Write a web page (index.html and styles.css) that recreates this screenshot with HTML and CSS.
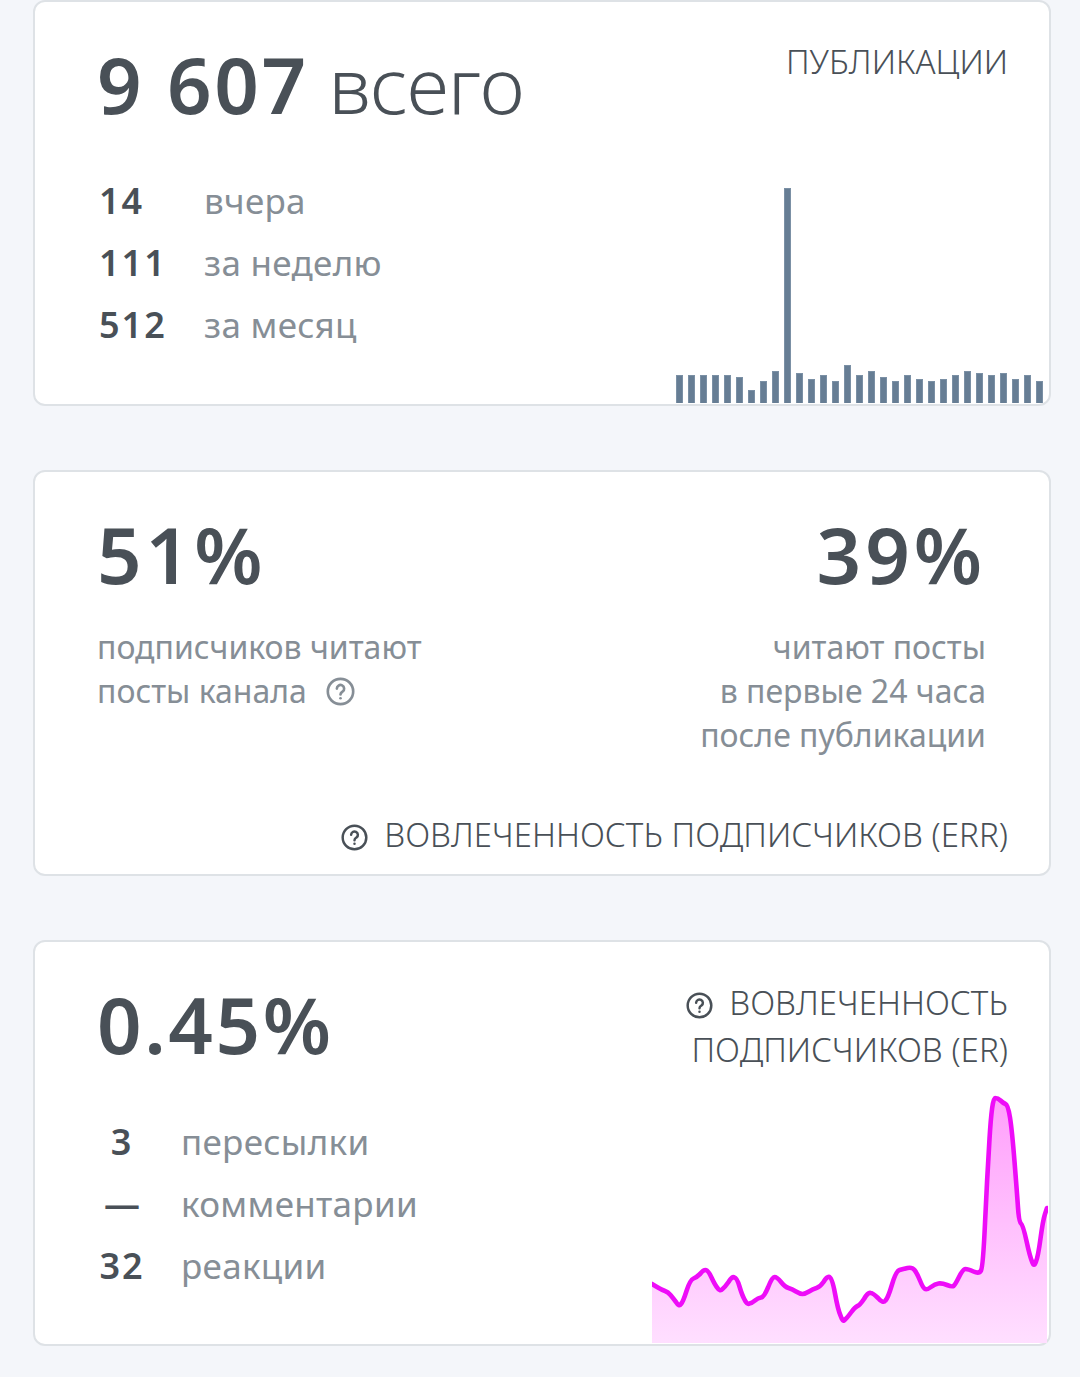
FILE: index.html
```html
<!DOCTYPE html>
<html lang="en">
<head>
    <meta charset="UTF-8">
    <meta name="viewport" content="width=device-width, initial-scale=1.0">
    <title>Статистика канала</title>
    <link rel="stylesheet" href="styles.css">
</head>
<body>
    <div class="container">
        <section class="card">
            <div class="card-head">
                <div class="big"><b>9 607</b> всего</div>
                <div class="caption caption-posts">ПУБЛИКАЦИИ</div>
            </div>
            <div class="card-body">
                <div class="stats stats-posts">
                    <div class="stat"><b>14</b><span>вчера</span></div>
                    <div class="stat"><b>111</b><span>за неделю</span></div>
                    <div class="stat"><b>512</b><span>за месяц</span></div>
                </div>
                <div class="bars">
                    <i style="height:28px"></i><i style="height:28px"></i><i style="height:28px"></i><i style="height:28px"></i>
                    <i style="height:28px"></i><i style="height:26px"></i><i style="height:13px"></i><i style="height:22px"></i>
                    <i style="height:32px"></i><i style="height:215px"></i><i style="height:30px"></i><i style="height:24px"></i>
                    <i style="height:28px"></i><i style="height:22px"></i><i style="height:38px"></i><i style="height:28px"></i>
                    <i style="height:32px"></i><i style="height:26px"></i><i style="height:22px"></i><i style="height:28px"></i>
                    <i style="height:24px"></i><i style="height:22px"></i><i style="height:24px"></i><i style="height:28px"></i>
                    <i style="height:32px"></i><i style="height:30px"></i><i style="height:28px"></i><i style="height:30px"></i>
                    <i style="height:24px"></i><i style="height:28px"></i><i style="height:22px"></i>
                </div>
            </div>
        </section>

        <section class="card card-err">
            <div class="err-row">
                <div class="err-col">
                    <div class="big"><b>51%</b></div>
                    <p class="note">подписчиков читают<br>посты канала
                        <svg class="help help-note" viewBox="0 0 24 24"><circle cx="12" cy="12" r="10.5"/><path d="M9 9.6a3 3 0 1 1 4.8 2.4c-1 .7-1.8 1.2-1.8 2.4"/><circle class="dot" cx="12" cy="17.6" r="1.1"/></svg>
                    </p>
                </div>
                <div class="err-col err-right">
                    <div class="big"><b>39%</b></div>
                    <p class="note">читают посты<br>в первые 24 часа<br>после публикации</p>
                </div>
            </div>
            <div class="caption caption-err">
                <svg class="help" viewBox="0 0 24 24"><circle cx="12" cy="12" r="10.5"/><path d="M9 9.6a3 3 0 1 1 4.8 2.4c-1 .7-1.8 1.2-1.8 2.4"/><circle class="dot" cx="12" cy="17.6" r="1.1"/></svg>
                ВОВЛЕЧЕННОСТЬ ПОДПИСЧИКОВ (ERR)
            </div>
        </section>

        <section class="card">
            <div class="card-head">
                <div class="big big-er"><b>0.45%</b></div>
                <div class="caption caption-er">
                    <svg class="help" viewBox="0 0 24 24"><circle cx="12" cy="12" r="10.5"/><path d="M9 9.6a3 3 0 1 1 4.8 2.4c-1 .7-1.8 1.2-1.8 2.4"/><circle class="dot" cx="12" cy="17.6" r="1.1"/></svg>
                    ВОВЛЕЧЕННОСТЬ<br>ПОДПИСЧИКОВ (ER)
                </div>
            </div>
            <div class="card-body">
                <div class="stats stats-er">
                    <div class="stat"><b>3</b><span>пересылки</span></div>
                    <div class="stat"><b class="dash">—</b><span>комментарии</span></div>
                    <div class="stat"><b>32</b><span>реакции</span></div>
                </div>
                <svg class="spark" viewBox="0 0 396 250">
                    <defs>
                        <linearGradient id="sparkFill" x1="0" y1="0" x2="0" y2="1">
                            <stop offset="0" stop-color="#ff9ffb"/>
                            <stop offset="1" stop-color="#ffdfff"/>
                        </linearGradient>
                    </defs>
                    <path class="spark-area" d="M0 191L5 194Q10 197 13 198Q16 199 18.5 202Q21 205 24 209Q27 214 29 211Q31 209 34.5 198Q38 187 41.5 185.5Q45 184 48 181Q51 177 53.5 177Q56 177 59.5 184.5Q63 192 65.5 195Q68 199 70.5 196Q73 194 76.5 189Q80 183 82.5 184.5Q85 185 87.5 193.5Q90 202 92.5 206.5Q95 212 97.5 210.5Q100 210 103 207.5Q106 205 109 204.5Q112 204 116 194.5Q120 184 122.5 184Q125 184 129 189Q133 194 136.5 195Q140 196 144 198.5Q148 201 150.5 201Q153 201 157 198.5Q161 196 164.5 195Q168 194 171.5 189Q175 183 177.5 184Q180 184 183 200.5Q186 217 188.5 222.5Q191 230 193 226.5Q195 225 199 219.5Q203 214 205.5 213Q208 212 212 206Q216 199 218.5 200Q221 200 226 205Q231 211 233.5 207.5Q236 205 240 191.5Q244 178 247.5 177Q251 176 255.5 175Q260 174 262.5 177Q265 180 268 187.5Q271 195 273 196Q275 197 279 194Q283 191 286.5 190.5Q290 190 295 192Q300 194 301.5 193Q303 192 307 184Q311 176 313.5 176Q316 176 321.5 178.5Q327 181 329 177.5Q331 174 333 130.5Q335 87 337.5 46Q340 5 343 5Q346 5 348.5 7.5Q351 10 353.5 11Q356 12 358 24.5Q360 37 362.5 68.5Q365 100 366 114.5Q367 129 369 130.5Q371 132 374.5 148Q378 164 380 168.5Q382 175 384 168.5Q386 164 388.5 145.5Q391 127 393 121L395 115V250H0Z"/>
                    <path class="spark-line" d="M0 191L5 194Q10 197 13 198Q16 199 18.5 202Q21 205 24 209Q27 214 29 211Q31 209 34.5 198Q38 187 41.5 185.5Q45 184 48 181Q51 177 53.5 177Q56 177 59.5 184.5Q63 192 65.5 195Q68 199 70.5 196Q73 194 76.5 189Q80 183 82.5 184.5Q85 185 87.5 193.5Q90 202 92.5 206.5Q95 212 97.5 210.5Q100 210 103 207.5Q106 205 109 204.5Q112 204 116 194.5Q120 184 122.5 184Q125 184 129 189Q133 194 136.5 195Q140 196 144 198.5Q148 201 150.5 201Q153 201 157 198.5Q161 196 164.5 195Q168 194 171.5 189Q175 183 177.5 184Q180 184 183 200.5Q186 217 188.5 222.5Q191 230 193 226.5Q195 225 199 219.5Q203 214 205.5 213Q208 212 212 206Q216 199 218.5 200Q221 200 226 205Q231 211 233.5 207.5Q236 205 240 191.5Q244 178 247.5 177Q251 176 255.5 175Q260 174 262.5 177Q265 180 268 187.5Q271 195 273 196Q275 197 279 194Q283 191 286.5 190.5Q290 190 295 192Q300 194 301.5 193Q303 192 307 184Q311 176 313.5 176Q316 176 321.5 178.5Q327 181 329 177.5Q331 174 333 130.5Q335 87 337.5 46Q340 5 343 5Q346 5 348.5 7.5Q351 10 353.5 11Q356 12 358 24.5Q360 37 362.5 68.5Q365 100 366 114.5Q367 129 369 130.5Q371 132 374.5 148Q378 164 380 168.5Q382 175 384 168.5Q386 164 388.5 145.5Q391 127 393 121L395 115"/>
                </svg>
            </div>
        </section>
    </div>
</body>
</html>
```

FILE: styles.css
```css
* {
    box-sizing: border-box;
}
body {
    font-family: 'Noto Sans', 'Open Sans', sans-serif;
    background: #f4f6fa;
    color: #495057;
    margin: 0;
    overflow: hidden;
}
.container {
    display: flex;
    flex-direction: column;
    gap: 64px;
    padding: 0 29px 0 33px;
}
.card {
    height: 406px;
    background: #fff;
    border: 2px solid #dee2e6;
    border-radius: 12px;
    display: flex;
    flex-direction: column;
}
.card-head {
    display: flex;
    justify-content: space-between;
    align-items: flex-start;
    padding: 34px 41px 0 62px;
}
.card-body {
    flex: 1;
    display: flex;
    justify-content: space-between;
    align-items: flex-end;
}
.big {
    font-size: 78px;
    line-height: 96px;
    font-weight: 300;
    letter-spacing: -0.8px;
    white-space: nowrap;
}
.big b {
    font-weight: 600;
    letter-spacing: 2.6px;
}
.err-col .big b {
    letter-spacing: 4px;
}
.caption {
    font-size: 33px;
    font-weight: 300;
    letter-spacing: 0.05px;
    white-space: nowrap;
    text-align: right;
}
.caption-posts {
    line-height: 50px;
    margin-top: 1px;
}
.caption-er {
    line-height: 47px;
    margin-top: 3px;
}
.help {
    width: 27px;
    height: 27px;
    margin-right: 8px;
    vertical-align: -4px;
    fill: none;
    stroke: currentColor;
    stroke-width: 2.2;
    stroke-linecap: round;
}
.help .dot {
    fill: currentColor;
    stroke: none;
}
.help-note {
    width: 29px;
    height: 29px;
    margin: 0 0 0 11px;
    vertical-align: -3px;
}
.stats {
    align-self: flex-start;
    display: flex;
    flex-direction: column;
    font-size: 35px;
}
.stats-posts {
    padding: 37px 0 0 64px;
}
.stats-er {
    padding: 37px 0 0 64px;
}
.stat {
    display: flex;
    align-items: center;
    height: 62px;
}
.stat b {
    font-weight: 600;
    font-size: 36px;
    letter-spacing: 2px;
}
.stat span {
    color: #868e96;
    font-weight: 400;
    letter-spacing: 0.3px;
}
.stats-posts .stat b {
    width: 105px;
}
.stats-er .stat b {
    width: 82px;
    padding-right: 36px;
    text-align: center;
}
.stats-er .dash {
    letter-spacing: 0;
}
.bars {
    display: flex;
    align-items: flex-end;
    gap: 4.8px;
    margin: 0 6px 1px 0;
}
.bars i {
    display: block;
    width: 7.2px;
    background: #667d94;
    border: 1px solid #7b90a5;
    border-bottom: 0;
}
.spark {
    width: 396px;
    height: 250px;
    margin: 0 1px 1px 0;
    display: block;
    overflow: hidden;
}
.spark-area {
    fill: url(#sparkFill);
}
.spark-line {
    fill: none;
    stroke: #ee0cf8;
    stroke-width: 4.6;
    stroke-linejoin: round;
    stroke-linecap: round;
}
.card-err {
    justify-content: space-between;
}
.err-row {
    display: flex;
    justify-content: space-between;
    padding: 34px 63px 0 62px;
}
.err-right {
    text-align: right;
}
.note {
    margin: 23px 0 0;
    font-size: 32px;
    line-height: 44px;
    color: #868e96;
}
.caption-err {
    padding: 0 41px 14px 0;
    line-height: 50px;
}
```
